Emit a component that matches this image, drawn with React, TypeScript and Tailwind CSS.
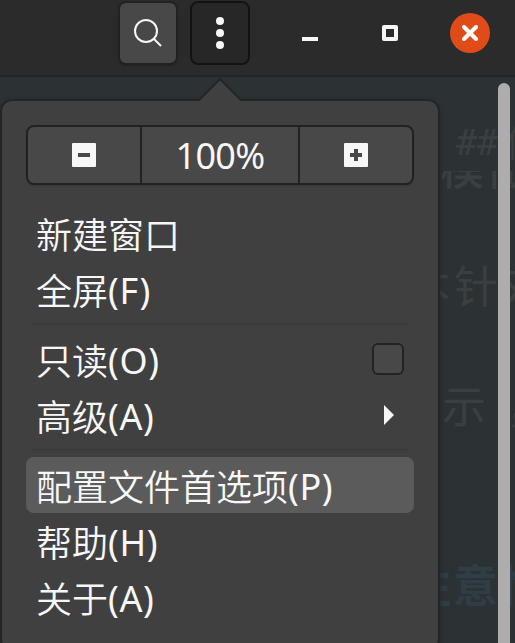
import React from "react";

function Label({ text, accel }: { text: string; accel?: string }) {
  return (
    <span className="flex h-14 items-center whitespace-nowrap">
      <span className="font-['Noto_Sans_CJK_SC',sans-serif] font-[350] leading-[56px]">{text}</span>
      {accel && <span className="pt-1 leading-[56px] tracking-[0.6px]">{accel}</span>}
    </span>
  );
}

function Item({ children, active }: { children: React.ReactNode; active?: boolean }) {
  return (
    <div className={`flex h-14 items-center justify-between rounded-lg px-2.5 ${active ? "bg-[#5b5b5b]" : ""}`}>
      {children}
    </div>
  );
}

function Separator() {
  return <div className="mx-1.5 my-1.5 h-0.5 bg-[#3a3a3a]" />;
}

function Header() {
  return (
    <header className="flex h-[77px] items-start border-b-2 border-[#242424] bg-[#2b2b2b] pt-px pl-[118px]">
      <button className="flex h-16 w-[60px] items-center justify-center rounded-lg border-2 border-[#222] bg-[#484848] shadow-[0_1px_1px_#252525]">
        <svg width="28" height="28" viewBox="0 0 28 28" fill="none" stroke="#f7f7f7" strokeWidth="2">
          <circle cx="12" cy="12" r="11" />
          <path d="M20 20l7 7" />
        </svg>
      </button>
      <button className="ml-3 flex h-16 w-[60px] flex-col items-center justify-center gap-1 rounded-lg border-2 border-[#131313] bg-[#272727]">
        <span className="size-2 rounded-full bg-[#f7f7f7]" />
        <span className="size-2 rounded-full bg-[#f7f7f7]" />
        <span className="size-2 rounded-full bg-[#f7f7f7]" />
      </button>
      <span className="mt-9 ml-[52px] h-1 w-4 bg-[#f7f7f7]" />
      <span className="mt-6 ml-16 size-4 rounded-[2px] border-4 border-[#f7f7f7]" />
      <span className="mt-3 ml-[52px] flex size-10 items-center justify-center rounded-full bg-[#e04b18]">
        <svg width="16" height="16" viewBox="0 0 16 16" stroke="#fff" strokeWidth="4" strokeLinecap="round">
          <path d="M2 2l12 12M14 2L2 14" />
        </svg>
      </span>
    </header>
  );
}

function Terminal() {
  const glyph = "absolute whitespace-nowrap leading-none";
  return (
    <main className="relative h-[566px] overflow-hidden bg-[#2c3234] font-['Noto_Sans_CJK_SC',sans-serif] text-[#3a4042]">
      <span className={`${glyph} top-[49px] left-[456px] font-['DejaVu_Sans_Mono',monospace] text-[35px] font-light`}>##</span>
      <span className={`${glyph} top-[46px] left-[505px] text-[36px]`}>使</span>
      <div className="absolute top-[94px] left-[440px] h-[18px] w-[75px] overflow-hidden">
        <span className={`${glyph} -top-[27px] left-0 text-[44px] font-medium tracking-[2px]`}>模做</span>
      </div>
      <span className={`${glyph} top-[185px] left-[406px] text-[44px] tracking-[4px]`}>本针对</span>
      <span className={`${glyph} top-[305px] left-[442px] text-[44px] tracking-[20px]`}>示，</span>
      <span className={`${glyph} top-[484px] left-[406px] text-[45px] font-bold tracking-[2px] text-[#2f3d46]`}>注意性</span>
      <div className="absolute top-1.5 right-[5px] h-[580px] w-3 rounded-full bg-[#adadad]" />
    </main>
  );
}

function Popover() {
  const cell = "flex items-center justify-center";
  return (
    <section className="absolute top-[99px] left-0 h-[552px] w-[440px] rounded-[12px] border-2 border-[#252525] bg-[#404040] px-6 pt-6 text-[36px] text-[#f7f7f7] shadow-[0_2px_5px_#20262a]">
      <svg className="absolute -top-[23px] left-[194px]" width="48" height="24" viewBox="0 0 48 24">
        <path d="M2 24L24 2L46 24Z" fill="#404040" />
        <path d="M1 22H3L24 1L45 22H47" fill="none" stroke="#252525" strokeWidth="2" />
      </svg>
      <div className="mb-5 grid h-[60px] grid-cols-[112px_160px_1fr] rounded-lg border-2 border-[#222] bg-[#484848] shadow-[0_1px_1px_#383838]">
        <div className={cell}>
          <svg width="24" height="24" viewBox="0 0 24 24">
            <rect width="24" height="24" rx="1" fill="#f7f7f7" />
            <path d="M6 12h12" stroke="#484848" strokeWidth="4" />
          </svg>
        </div>
        <div className={`${cell} border-x-2 border-[#222] pt-0.5 leading-[54px] tracking-[-0.7px]`}>100%</div>
        <div className={cell}>
          <svg width="24" height="24" viewBox="0 0 24 24">
            <rect width="24" height="24" rx="1" fill="#f7f7f7" />
            <path d="M6 12h12M12 6v12" stroke="#484848" strokeWidth="4" />
          </svg>
        </div>
      </div>
      <Item><Label text="新建窗口" /></Item>
      <Item><Label text="全屏" accel="(F)" /></Item>
      <Separator />
      <Item>
        <Label text="只读" accel="(O)" />
        <span className="size-8 rounded-md border-2 border-[#232323] bg-[#484848]" />
      </Item>
      <Item>
        <Label text="高级" accel="(A)" />
        <svg className="mr-2.5" width="10" height="20" viewBox="0 0 10 20"><path d="M0 0L10 10L0 20Z" fill="#f7f7f7" /></svg>
      </Item>
      <Separator />
      <Item active><Label text="配置文件首选项" accel="(P)" /></Item>
      <Item><Label text="帮助" accel="(H)" /></Item>
      <Item><Label text="关于" accel="(A)" /></Item>
    </section>
  );
}

export default function App() {
  return (
    <div className="relative h-[643px] w-[515px] overflow-hidden font-['Noto_Sans','Noto_Sans_CJK_SC',sans-serif]">
      <Header />
      <Terminal />
      <Popover />
    </div>
  );
}
